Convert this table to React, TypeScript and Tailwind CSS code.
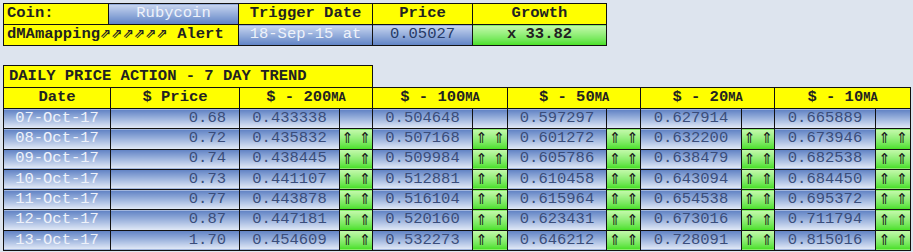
const rows = [
  { date: '07-Oct-17', price: '0.68', ma: ['0.433338', '0.504648', '0.597297', '0.627914', '0.665889'], up: false },
  { date: '08-Oct-17', price: '0.72', ma: ['0.435832', '0.507168', '0.601272', '0.632200', '0.673946'], up: true },
  { date: '09-Oct-17', price: '0.74', ma: ['0.438445', '0.509984', '0.605786', '0.638479', '0.682538'], up: true },
  { date: '10-Oct-17', price: '0.73', ma: ['0.441107', '0.512881', '0.610458', '0.643094', '0.684450'], up: true },
  { date: '11-Oct-17', price: '0.77', ma: ['0.443878', '0.516104', '0.615964', '0.654538', '0.695372'], up: true },
  { date: '12-Oct-17', price: '0.87', ma: ['0.447181', '0.520160', '0.623431', '0.673016', '0.711794'], up: true },
  { date: '13-Oct-17', price: '1.70', ma: ['0.454609', '0.532273', '0.646212', '0.728091', '0.815016'], up: true },
]

const maNames = ['200', '100', '50', '20', '10']

const yellow = 'bg-[#ffff00] text-[#222] font-bold border border-[#111]'
const blueTop = 'bg-gradient-to-b from-[#c9d6ef] to-[#5f82c4] border border-[#111]'
const blueRow = 'bg-gradient-to-b from-[#5f81c3] to-[#e4ebf7] border border-[#111]'
const green = 'bg-gradient-to-b from-[#c4f9ac] to-[#44e01e] border border-[#111]'

export default function App() {
  return (
    <div className="min-h-screen w-[913px] h-[252px] bg-[#dde4ee] pt-[3px] pl-[3px] text-[15.5px] leading-none" style={{ fontFamily: '"Liberation Mono", "DejaVu Sans Mono", monospace' }}>
      <table className="border-collapse table-fixed">
        <colgroup>
          <col className="w-[105px]" />
          <col className="w-[130px]" />
          <col className="w-[134px]" />
          <col className="w-[100px]" />
          <col className="w-[134px]" />
        </colgroup>
        <tbody>
          <tr className="h-[21px]">
            <td className={`${yellow} text-left pl-[3px]`}>Coin:</td>
            <td className={`${blueTop} text-center text-[#eef2fa]`}>Rubycoin</td>
            <td className={`${yellow} text-center`}>Trigger Date</td>
            <td className={`${yellow} text-center`}>Price</td>
            <td className={`${yellow} text-center`}>Growth</td>
          </tr>
          <tr className="h-[21px]">
            <td colSpan={2} className={`${yellow} text-left pl-[3px] whitespace-nowrap`}>
              dMAmapping<span className="text-[13.5px]" style={{ fontFamily: '"DejaVu Sans", sans-serif' }}>⇗⇗⇗⇗⇗⇗</span> Alert
            </td>
            <td className={`${blueTop} text-center text-[#eef2fa]`}>18-Sep-15 at</td>
            <td className={`${blueTop} text-center text-[#263a66]`}>0.05027</td>
            <td className={`${green} text-center font-bold text-[#222]`}>x 33.82</td>
          </tr>
        </tbody>
      </table>

      <div className="mt-[19px] w-[370px] h-[22px] flex items-center pl-[5px] border border-b-0 border-[#111] bg-[#ffff00] text-[#222] font-bold">
        DAILY PRICE ACTION - 7 DAY TREND
      </div>
      <table className="border-collapse table-fixed">
        <colgroup>
          <col className="w-[107px]" />
          <col className="w-[129px]" />
          <col className="w-[100px]" />
          <col className="w-[33px]" />
          <col className="w-[100px]" />
          <col className="w-[35px]" />
          <col className="w-[99px]" />
          <col className="w-[34px]" />
          <col className="w-[101px]" />
          <col className="w-[33px]" />
          <col className="w-[101px]" />
          <col className="w-[35px]" />
        </colgroup>
        <thead>
          <tr className="h-[21px]">
            <th className={`${yellow} text-center`}>Date</th>
            <th className={`${yellow} text-center`}>$ Price</th>
            {maNames.map((n) => (
              <th key={n} colSpan={2} className={`${yellow} text-center whitespace-pre`}>
                $ - {n}<span className="text-[12px]">MA</span>
              </th>
            ))}
          </tr>
        </thead>
        <tbody>
          {rows.map((r) => (
            <tr key={r.date} className="h-[20.3px]">
              <td className={`${blueRow} text-center text-[#eef2fa]`}>{r.date}</td>
              <td className={`${blueRow} text-right pr-[13px] text-[#3a4d7a]`}>{r.price}</td>
              {r.ma.map((v, i) => (
                <>
                  <td key={'v' + i} className={`${blueRow} text-center text-[#3a4d7a]`}>{v}</td>
                  {r.up ? (
                    <td key={'a' + i} className={`${green} text-center text-[15px] text-[#1a1a1a] whitespace-pre`} style={{ fontFamily: '"DejaVu Sans", sans-serif' }}>
                      ⇑ ⇑
                    </td>
                  ) : (
                    <td key={'a' + i} className={blueRow}></td>
                  )}
                </>
              ))}
            </tr>
          ))}
        </tbody>
      </table>
    </div>
  )
}
